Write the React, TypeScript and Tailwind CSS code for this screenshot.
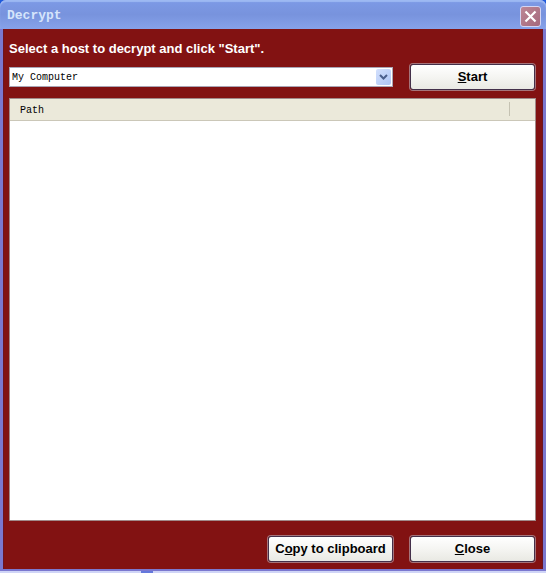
import type { ReactNode } from "react";

const ActionButton = ({ children }: { children: ReactNode }) => {
  return (
    <button
      type="button"
      className="m-px h-[26px] w-[125px] shrink-0 rounded-[3px] border border-[#43304a] bg-linear-to-b from-white via-[#f5f5f2] to-[#e9e9e3] text-center text-[13px] leading-4 font-bold whitespace-nowrap text-black shadow-[0_0_0_1px_#a5747b]"
    >
      {children}
    </button>
  );
};

const TitleBar = () => {
  return (
    <header className="flex h-[29px] shrink-0 items-center justify-between rounded-t-[6px] bg-linear-to-b from-[#7d9ae6] via-[#7893dd] to-[#86a2ea] pt-[3px] pr-[5px] pl-[7px] shadow-[inset_0_2px_1px_#9db9f2]">
      <h1 className="font-['Liberation_Mono',monospace] text-[13px] leading-4 font-bold text-[#d5e4fb]">
        Decrypt
      </h1>
      <button
        type="button"
        aria-label="Close window"
        className="flex size-[21px] items-center justify-center rounded-[3px] border border-[#d3d5f3] bg-linear-to-br from-[#bd8795] to-[#a5687c]"
      >
        <svg width="13" height="13" viewBox="0 0 13 13" fill="none">
          <path d="M1.5 1.5l10 10M11.5 1.5l-10 10" stroke="#fff" strokeWidth="2.2" />
        </svg>
      </button>
    </header>
  );
};

const HostSelect = () => {
  return (
    <div className="relative min-w-0 flex-1">
      <select
        id="host"
        className="block h-5 w-full appearance-none rounded-none border border-[#a9a5b5] bg-white pt-px pr-5 pl-[2px] font-['Liberation_Mono',monospace] text-[10px] leading-4 text-black"
      >
        <option>My Computer</option>
      </select>
      <span className="pointer-events-none absolute top-[2px] right-[2px] flex h-4 w-[15px] items-center justify-center rounded-[2px] bg-linear-to-br from-[#d3e0fc] to-[#adc5f5]">
        <svg width="9" height="6" viewBox="0 0 9 6" fill="none">
          <path d="M1 1l3.5 3.5L8 1" stroke="#4a5f8c" strokeWidth="2" />
        </svg>
      </span>
    </div>
  );
};

const App = () => {
  return (
    <div className="flex h-screen flex-col bg-linear-to-b from-[#1f5bdc] from-5% to-[#d0d5f7] to-95% font-['Liberation_Sans',Arial,sans-serif]">
      <div className="flex min-h-0 flex-1 flex-col rounded-t-[6px] bg-[#7b78cf]">
        <TitleBar />
        <main className="mx-[3px] mb-[2px] flex min-h-0 flex-1 flex-col border-x border-[#6c1422] bg-[#821212] pt-3 pr-[6px] pb-[6px] pl-[5px]">
          <label htmlFor="host" className="text-[13px] leading-4 font-bold text-white">
            Select a host to decrypt and click "Start".
          </label>
          <div className="mt-[6px] flex items-center gap-4">
            <HostSelect />
            <ActionButton>
              <u>S</u>tart
            </ActionButton>
          </div>
          <div className="mt-[7px] min-h-0 flex-1 border border-[#a18a8a] bg-white">
            <table className="w-full border-collapse">
              <thead>
                <tr className="h-[21px] border-b border-[#cbc7b8] bg-[#ebe9da]">
                  <th className="p-0 text-left font-normal">
                    <div className="flex h-[14px] items-center border-r border-[#c5c2b2] pt-[3px] pl-[10px] font-['Liberation_Mono',monospace] text-[10px] leading-3 text-black">
                      Path
                    </div>
                  </th>
                  <td className="w-[25px] p-0" />
                </tr>
              </thead>
              <tbody />
            </table>
          </div>
          <footer className="mt-[14px] flex justify-end gap-[15px]">
            <ActionButton>
              C<u>o</u>py to clipboard
            </ActionButton>
            <ActionButton>
              <u>C</u>lose
            </ActionButton>
          </footer>
        </main>
      </div>
      <div className="h-[2px] shrink-0 bg-[#d0d5f7] pl-[141px]">
        <div className="h-full w-3 bg-[#6478dc]" />
      </div>
    </div>
  );
};

export default App;
